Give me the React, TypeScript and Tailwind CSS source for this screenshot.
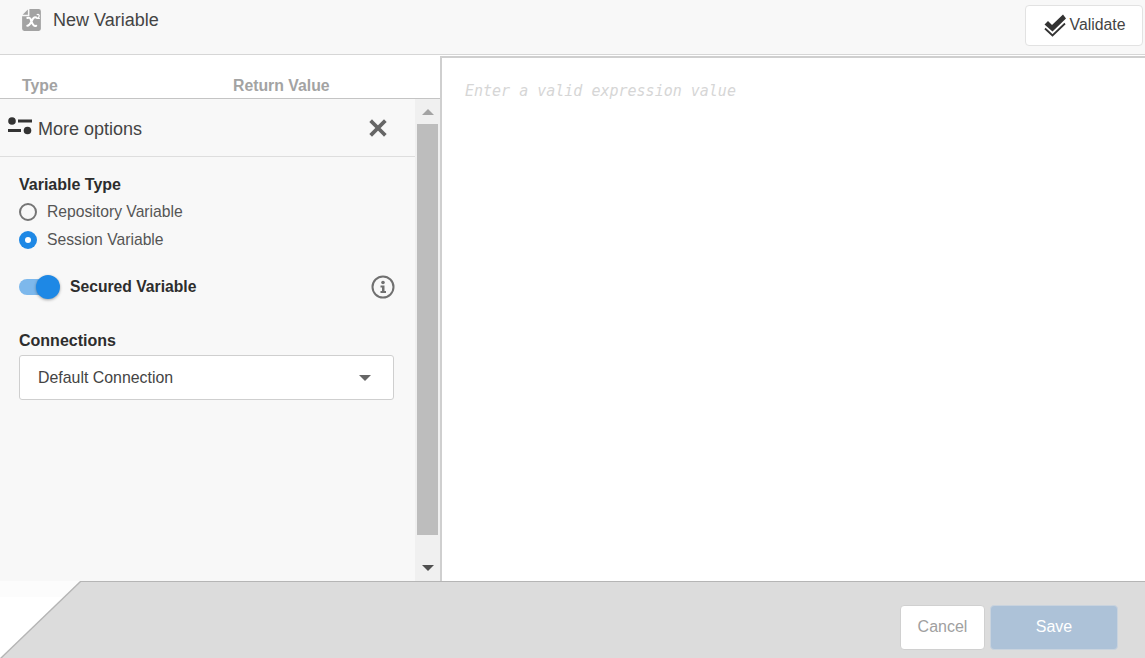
/**
 * New Variable editor: header, left options panel with scrollbar, expression area, footer.
 */

function FileXIcon() {
  return (
    <svg width="23" height="24" viewBox="0 0 22 23" className="shrink-0">
      <path d="M9 1h9a2 2 0 0 1 2 2v17a2 2 0 0 1-2 2H4a2 2 0 0 1-2-2V8h7z" fill="#a3a3a3" />
      <path d="M7.500 1.500v5h-5z" fill="#a3a3a3" />
      <path d="M7 9.500c3-1 3 1 4 3.500s2 5 4.500 4M15.500 9c-3-1-3.500 2-4.500 4s-2 4-4 4" fill="none" stroke="#fff" strokeWidth="2" strokeLinecap="round" />
      <path d="M16 6.500c2-1 3 .5 2 2l-1.500 1.500h2.500" fill="none" stroke="#fff" strokeWidth="1.200" />
    </svg>
  )
}

function ChecksIcon() {
  return (
    <svg width="24" height="24" viewBox="0 0 24 24" className="shrink-0">
      <path d="M1.500 11.500l3.500-3.500 4 4L20 1.500l3 4L9.500 18.500z" fill="#333" />
      <path d="M2 15.500l7.500 7L22 10.500" fill="none" stroke="#333" strokeWidth="1.800" />
    </svg>
  )
}

function OptionsIcon() {
  return (
    <svg width="24" height="18" viewBox="0 0 24 18" className="-mt-[3px] shrink-0">
      <circle cx="4" cy="4" r="3.800" fill="#333" />
      <rect x="10" y="2.500" width="14" height="3" fill="#333" />
      <rect x="0" y="12" width="13" height="3" fill="#333" />
      <circle cx="19.500" cy="13.500" r="3.800" fill="#333" />
    </svg>
  )
}

function CloseIcon() {
  return (
    <svg width="18" height="18" viewBox="0 0 18 18" className="shrink-0">
      <path d="M3 3l12 12M15 3L3 15" stroke="#666" strokeWidth="3.800" strokeLinecap="square" />
    </svg>
  )
}

function InfoIcon() {
  return (
    <svg width="24" height="24" viewBox="0 0 24 24" className="mr-[1px] -mt-[1px] shrink-0">
      <circle cx="12" cy="12" r="10.500" fill="none" stroke="#707070" strokeWidth="2" />
      <circle cx="12" cy="7.500" r="1.800" fill="#707070" />
      <path d="M9.500 10.500H13.500V16H15V18H9.500V16H11V12.500H9.500z" fill="#707070" />
    </svg>
  )
}

export default function App() {
  return (
    <div className="flex h-[658px] w-[1145px] flex-col overflow-hidden bg-white font-['Liberation_Sans',sans-serif] text-[#333]">
      {/* Header */}
      <div className="flex h-[55px] shrink-0 items-start justify-between border-b border-[#d6d6d6] bg-[#f8f8f8]">
        <div className="flex items-center gap-[10px] pl-[20px] pt-[8px]">
          <FileXIcon />
          <span className="text-[18px] leading-[24px] text-[#444]">New Variable</span>
        </div>
        <button className="mr-[2px] mt-[5px] flex h-[41px] w-[118px] items-center justify-center gap-[3px] rounded-[4px] border border-[#e2e2e2] bg-white pb-[2px] text-[15.8px] text-[#444]">
          <ChecksIcon />
          Validate
        </button>
      </div>

      {/* Body */}
      <div className="flex h-[526px] shrink-0">
        <div className="flex w-[440px] shrink-0 flex-col">
          <div className="flex h-[44px] shrink-0 items-end border-b border-[#c4c4c4] bg-white pb-[2px] pl-[22px] text-[15.8px] font-bold leading-[20px] text-[#a3a3a3]">
            <span className="w-[211px]">Type</span>
            <span>Return Value</span>
          </div>
          <div className="flex min-h-0 flex-1 bg-[#f8f8f8]">
            <div className="w-[415px] shrink-0">
              <div className="flex h-[58px] items-center border-b border-[#dedede] pl-[8px] pr-[28px]">
                <OptionsIcon />
                <span className="ml-[6px] mt-[4px] flex-1 text-[18px] text-[#444]">More options</span>
                <CloseIcon />
              </div>
              <div className="px-[19px] pt-[18px]">
                <div className="text-[16px] font-bold leading-[20px] text-[#2d2d2d]">Variable Type</div>
                <div className="mt-[7px] flex h-[20px] items-center gap-[10px]">
                  <span className="h-[18px] w-[18px] rounded-full border-2 border-[#757575]" />
                  <span className="text-[15.7px] text-[#555]">Repository Variable</span>
                </div>
                <div className="mt-[8px] flex h-[20px] items-center gap-[10px]">
                  <span className="flex h-[18px] w-[18px] items-center justify-center rounded-full bg-[#1e88e5]">
                    <span className="h-[6px] w-[6px] rounded-full bg-white" />
                  </span>
                  <span className="text-[15.7px] text-[#555]">Session Variable</span>
                </div>
                <div className="mt-[24px] flex h-[26px] items-center">
                  <span className="relative h-[16px] w-[34px] rounded-full bg-[#7db8ec]">
                    <span className="absolute left-[17px] top-[-4px] h-[24px] w-[24px] rounded-full bg-[#1e88e5] shadow-[0_1px_3px_rgba(0,0,0,0.35)]" />
                  </span>
                  <span className="ml-[17px] flex-1 text-[15.7px] font-bold text-[#2d2d2d]">Secured Variable</span>
                  <InfoIcon />
                </div>
                <div className="mt-[31px] text-[16px] font-bold leading-[20px] text-[#2d2d2d]">Connections</div>
                <div className="mt-[4px] flex h-[45px] w-[375px] items-center justify-between rounded-[3px] border border-[#cfcfcf] bg-white pl-[18px] pr-[22px] text-[15.9px] text-[#444]">
                  Default Connection
                  <span className="h-0 w-0 border-x-[6px] border-t-[6px] border-x-transparent border-t-[#666]" />
                </div>
              </div>
            </div>
            {/* Scrollbar */}
            <div className="flex w-[25px] shrink-0 flex-col items-center bg-[#f0f0f0]">
              <div className="flex h-[25px] items-center justify-center">
                <span className="h-0 w-0 border-x-[6px] border-b-[6px] border-x-transparent border-b-[#a3a3a3]" />
              </div>
              <div className="h-[411px] w-[21px] bg-[#bdbdbd]" />
              <div className="flex flex-1 items-end justify-center pb-[10px]">
                <span className="h-0 w-0 border-x-[6px] border-t-[6px] border-x-transparent border-t-[#505050]" />
              </div>
            </div>
          </div>
        </div>
        <div className="mt-[1px] flex-1 border-l-2 border-t-2 border-[#cfcfcf] bg-white pl-[23px] pt-[21px]">
          <span className="font-['DejaVu_Sans_Mono',monospace] text-[15px] italic leading-[20px] text-[#d6d6d6]">
            Enter a valid expression value
          </span>
        </div>
      </div>

      {/* Footer */}
      <div className="relative flex-1 bg-white">
        <div className="absolute left-0 top-0 h-[16px] w-[80px] bg-[#fcfcfc]" />
        <div className="absolute inset-0 bg-[#b5b5b5] [clip-path:polygon(80px_0,100%_0,100%_100%,0_100%)]" />
        <div className="absolute inset-0 flex items-start justify-end gap-[5px] bg-[#dcdcdc] pr-[27px] pt-[24px] [clip-path:polygon(81px_1px,100%_1px,100%_100%,2px_100%)]">
          <button className="h-[45px] w-[85px] rounded-[4px] border border-[#d0d0d0] bg-white pb-[2px] text-[16px] text-[#a0a0a0]">
            Cancel
          </button>
          <button className="h-[45px] w-[128px] rounded-[4px] border border-[#c9d3de] bg-[#adc2d8] pb-[2px] text-[16px] text-white">
            Save
          </button>
        </div>
      </div>
    </div>
  )
}
